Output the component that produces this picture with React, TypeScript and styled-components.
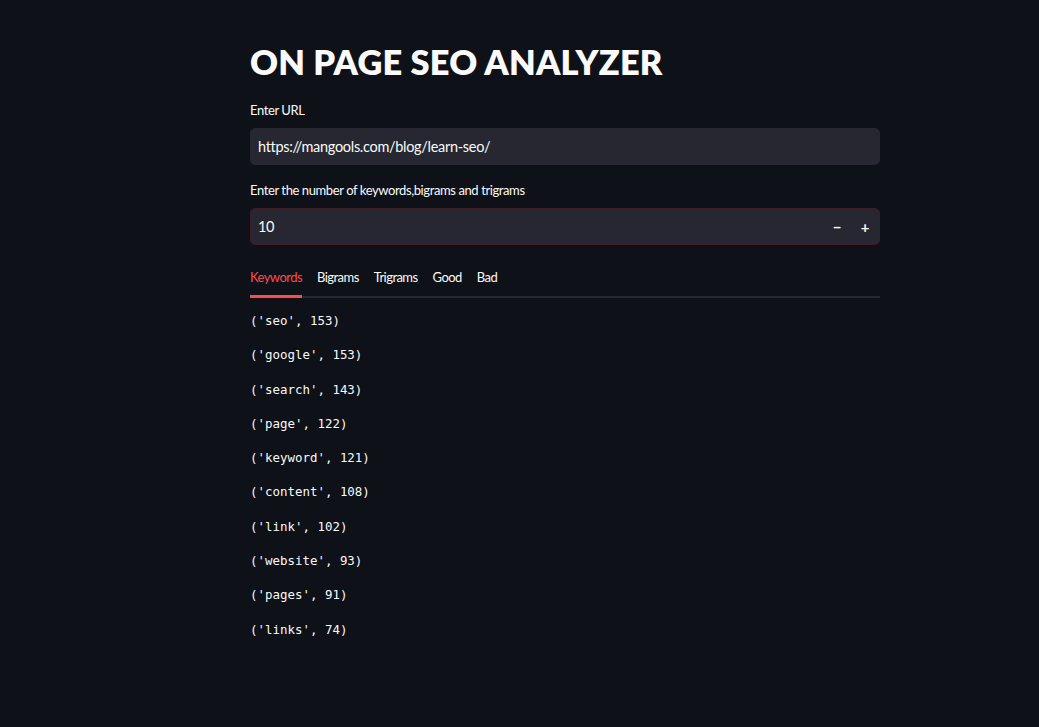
import React from "react";
import styled, { createGlobalStyle } from "styled-components";

const Global = createGlobalStyle`
  html, body { margin: 0; padding: 0; background: #0e1117; }
  body { font-family: Lato, "Noto Sans", sans-serif; color: #fafafa; }
  * { box-sizing: border-box; }
`;

const Page = styled.div`
  min-height: 727px;
  background: #0e1117;
  display: flex;
  padding-left: 250px;
`;

const Main = styled.main`
  width: 630px;
  padding-top: 39px;
  display: flex;
  flex-direction: column;
`;

const Title = styled.h1`
  margin: 0;
  font-family: Lato, sans-serif;
  font-weight: 800;
  font-size: 34.4px;
  line-height: 46px;
  letter-spacing: 0.2px;
  color: #fafafa;
`;

const Field = styled.div<{ $top: number }>`
  margin-top: ${(p) => p.$top}px;
  display: flex;
  flex-direction: column;
`;

const Label = styled.label`
  font-size: 13px;
  line-height: 18px;
  letter-spacing: -0.4px;
  color: #fafafa;
  margin-bottom: 9px;
`;

const InputBox = styled.div<{ $focus?: boolean }>`
  height: 37px;
  border-radius: 5px;
  background: #262730;
  border: 1px solid ${(p) => (p.$focus ? "#3e1d24" : "#262730")};
  display: flex;
  align-items: center;
  padding: 0 0 0 7px;
  font-size: 14.5px;
  letter-spacing: -0.3px;
  color: #fafafa;
`;

const Value = styled.span`
  flex: 1;
`;

const StepButton = styled.span`
  width: 28px;
  display: flex;
  justify-content: center;
  font-weight: 700;
  font-size: 15px;
`;

const Tabs = styled.div`
  margin-top: 23px;
  display: flex;
  gap: 15px;
  border-bottom: 2px solid #262730;
`;

const Tab = styled.div<{ $active?: boolean }>`
  font-size: 13px;
  line-height: 18px;
  letter-spacing: -0.55px;
  padding-bottom: 9px;
  color: ${(p) => (p.$active ? "#ff4b4b" : "#fafafa")};
  border-bottom: 3px solid ${(p) => (p.$active ? "#ff4b4b" : "transparent")};
  margin-bottom: -2px;
`;

const List = styled.div`
  margin-top: 14px;
  display: flex;
  flex-direction: column;
  gap: 16.3px;
`;

const Row = styled.div`
  font-family: "DejaVu Sans Mono", "Liberation Mono", monospace;
  font-size: 12.45px;
  line-height: 18px;
  color: #fafafa;
`;

const rows: [string, number][] = [
  ["seo", 153],
  ["google", 153],
  ["search", 143],
  ["page", 122],
  ["keyword", 121],
  ["content", 108],
  ["link", 102],
  ["website", 93],
  ["pages", 91],
  ["links", 74],
];

export default function App() {
  return (
    <Page>
      <Global />
      <Main>
        <Title>ON PAGE SEO ANALYZER</Title>
        <Field $top={16}>
          <Label>Enter URL</Label>
          <InputBox>
            <Value>https://mangools.com/blog/learn-seo/</Value>
          </InputBox>
        </Field>
        <Field $top={16}>
          <Label>Enter the number of keywords,bigrams and trigrams</Label>
          <InputBox $focus>
            <Value>10</Value>
            <StepButton>−</StepButton>
            <StepButton>+</StepButton>
          </InputBox>
        </Field>
        <Tabs>
          <Tab $active>Keywords</Tab>
          <Tab>Bigrams</Tab>
          <Tab>Trigrams</Tab>
          <Tab>Good</Tab>
          <Tab>Bad</Tab>
        </Tabs>
        <List>
          {rows.map(([w, n]) => (
            <Row key={w}>('{w}', {n})</Row>
          ))}
        </List>
      </Main>
    </Page>
  );
}
